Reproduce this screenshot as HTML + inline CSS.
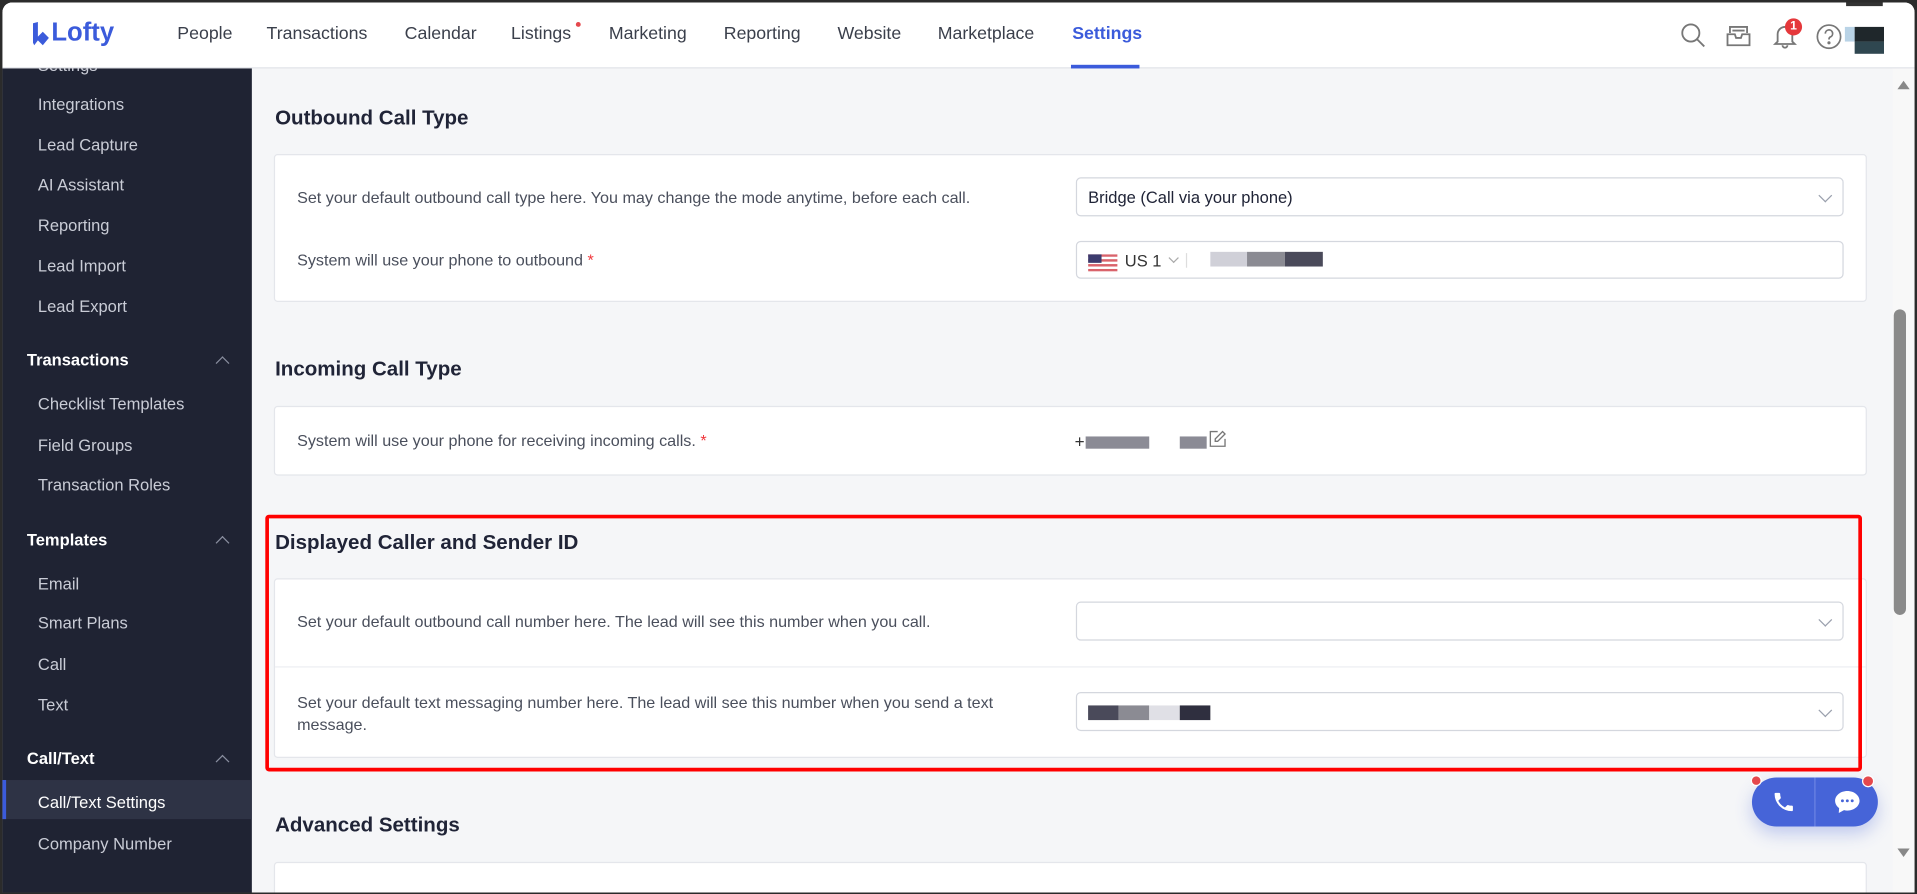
<!DOCTYPE html>
<html><head><meta charset="utf-8"><style>
*{box-sizing:border-box;margin:0;padding:0}
html,body{width:1917px;height:894px;overflow:hidden;background:#2b2b2b}
#w{position:absolute;left:0;top:0;width:1568px;height:731px;transform:scale(1.22258);transform-origin:0 0;font-family:"Liberation Sans",Arial,sans-serif;background:#2b2b2b}
#in{position:absolute;left:2px;top:2px;right:2px;bottom:1px;background:#f5f6f8;border-radius:8px 8px 0 0;overflow:hidden}
.a{position:absolute}
#hd{left:0;top:0;width:100%;height:54px;background:#fff;border-bottom:1px solid #e1e3e8}
.nav{top:18px;font-size:14.5px;color:#3a3f4b}
#sb{left:0;top:54px;width:204px;bottom:0;background:#1f2333;overflow:hidden}
.si{left:29px;font-size:13.5px;color:#c9ccd6}
.sh{left:20px;font-size:13.5px;color:#fff;font-weight:bold}
.car{left:176px;width:8px;height:8px;border-left:1.3px solid #8a8fa0;border-top:1.3px solid #8a8fa0;transform:rotate(45deg)}
.tt{left:223px;font-size:16.8px;font-weight:bold;color:#202437}
.card{left:222px;width:1303px;background:#fff;border:1px solid #e4e6eb;border-radius:3px}
.tx{left:241px;font-size:13.2px;color:#4a4f5c}
.sel{left:878px;width:628px;height:32px;border:1px solid #d4d7de;border-radius:4px;background:#fff;font-size:13.5px;color:#202437;padding:8px 9px}
.chev{position:absolute;right:10px;top:10px;width:8px;height:8px;border-right:1px solid #9aa0ad;border-bottom:1px solid #9aa0ad;transform:rotate(45deg)}
.st{color:#f0353a}
.bl{position:absolute;height:12px}
</style></head><body><div id="w"><div id="in">
<div id="hd" class="a">
 <svg class="a" style="left:24px;top:16px" width="14" height="20" viewBox="0 0 14 20"><path d="M1 1 L5 0 L5 12 L9 8 L14 13 L9 19 L5 15 L2 19 L1 17Z" fill="#3b5bdb"/></svg>
 <div class="a" style="left:40px;top:13px;font-size:21px;font-weight:bold;color:#3b5bdb">Lofty</div>
 <div class="a nav" style="left:143px">People</div>
 <div class="a nav" style="left:216px">Transactions</div>
 <div class="a nav" style="left:329px">Calendar</div>
 <div class="a nav" style="left:416px">Listings</div>
 <div class="a" style="left:469px;top:16px;width:4px;height:4px;border-radius:2px;background:#e5484d"></div>
 <div class="a nav" style="left:496px">Marketing</div>
 <div class="a nav" style="left:590px">Reporting</div>
 <div class="a nav" style="left:683px">Website</div>
 <div class="a nav" style="left:765px">Marketplace</div>
 <div class="a nav" style="left:875px;color:#3b5bdb;font-weight:bold">Settings</div>
 <div class="a" style="left:874px;top:51px;width:56px;height:3px;background:#3b5bdb"></div>
 <svg class="a" style="left:1372px;top:16px" width="22" height="22" viewBox="0 0 22 22" fill="none" stroke="#777" stroke-width="1.5"><circle cx="9" cy="9" r="7"/><path d="M14 14l6 6"/></svg>
 <svg class="a" style="left:1409px;top:16px" width="22" height="22" viewBox="0 0 22 22" fill="none" stroke="#777" stroke-width="1.5"><path d="M4 9V4h14v5M2 10h6l1 3h4l1-3h6v9H2z"/><path d="M6 7h10"/></svg>
 <svg class="a" style="left:1447px;top:16px" width="22" height="22" viewBox="0 0 22 22" fill="none" stroke="#777" stroke-width="1.5"><path d="M5 16V10a6 6 0 0 1 12 0v6l2 2H3z"/><path d="M9 19a2 2 0 0 0 4 0"/></svg>
 <div class="a" style="left:1458px;top:13px;width:14px;height:14px;border-radius:7px;background:#e5383b;color:#fff;font-size:10px;font-weight:bold;text-align:center;line-height:14px">1</div>
 <svg class="a" style="left:1483px;top:17px" width="22" height="22" viewBox="0 0 22 22" fill="none" stroke="#777" stroke-width="1.4"><circle cx="11" cy="11" r="9.5"/><path d="M8 8.5a3 3 0 1 1 4 2.8c-.8.4-1 1-1 2"/><circle cx="11" cy="16" r=".6" fill="#777"/></svg>
 <div class="a" style="left:1507px;top:20px;width:8px;height:12px;background:#b9d3e6"></div>
 <div class="a" style="left:1515px;top:20px;width:24px;height:12px;background:#1f272b"></div>
 <div class="a" style="left:1515px;top:32px;width:24px;height:10px;background:#2f4750"></div>
 <div class="a" style="left:1508px;top:0;width:30px;height:3px;background:#333"></div>
</div>
<div id="sb" class="a">
 <div class="a si" style="top:-10px">Settings</div>
 <div class="a si" style="top:22px">Integrations</div>
 <div class="a si" style="top:55px">Lead Capture</div>
 <div class="a si" style="top:88px">AI Assistant</div>
 <div class="a si" style="top:121px">Reporting</div>
 <div class="a si" style="top:154px">Lead Import</div>
 <div class="a si" style="top:187px">Lead Export</div>
 <div class="a sh" style="top:231px">Transactions</div><div class="a car" style="top:237px"></div>
 <div class="a si" style="top:267px">Checklist Templates</div>
 <div class="a si" style="top:301px">Field Groups</div>
 <div class="a si" style="top:333px">Transaction Roles</div>
 <div class="a sh" style="top:378px">Templates</div><div class="a car" style="top:384px"></div>
 <div class="a si" style="top:414px">Email</div>
 <div class="a si" style="top:446px">Smart Plans</div>
 <div class="a si" style="top:480px">Call</div>
 <div class="a si" style="top:513px">Text</div>
 <div class="a sh" style="top:557px">Call/Text</div><div class="a car" style="top:563px"></div>
 <div class="a" style="left:0;top:582px;width:204px;height:32px;background:#2e3345;border-left:3px solid #3b5bdb"></div>
 <div class="a si" style="top:593px;color:#fff">Call/Text Settings</div>
 <div class="a si" style="top:627px">Company Number</div>
</div>
<div class="a tt" style="top:85px">Outbound Call Type</div>
<div class="a card" style="top:124px;height:121px"></div>
<div class="a tx" style="top:152px">Set your default outbound call type here. You may change the mode anytime, before each call.</div>
<div class="a sel" style="top:143px">Bridge (Call via your phone)<span class="chev"></span></div>
<div class="a tx" style="top:203px">System will use your phone to outbound <span class="st">*</span></div>
<div class="a sel" style="top:195px;height:31px;padding:7px 9px">
 <svg style="position:absolute;left:9px;top:10px" width="24" height="14" viewBox="0 0 24 14"><rect width="24" height="14" fill="#fff"/><g fill="#d9636b"><rect y="0" width="24" height="2"/><rect y="4" width="24" height="2"/><rect y="8" width="24" height="2"/><rect y="12" width="24" height="2"/></g><rect width="11" height="7" fill="#3c3b6e"/></svg>
 <span style="position:absolute;left:39px;top:8px;color:#333">US 1</span>
 <span style="position:absolute;left:76px;top:10px;width:6px;height:6px;border-right:1px solid #aaa;border-bottom:1px solid #aaa;transform:rotate(45deg)"></span>
 <span style="position:absolute;left:89px;top:9px;width:1px;height:12px;background:#ddd"></span>
 <span class="bl" style="left:109px;top:8px;width:30px;background:#d0d0d8"></span><span class="bl" style="left:139px;top:8px;width:31px;background:#8b8b93"></span><span class="bl" style="left:170px;top:8px;width:31px;background:#4a4a5a"></span>
</div>
<div class="a tt" style="top:290px">Incoming Call Type</div>
<div class="a card" style="top:330px;height:57px"></div>
<div class="a tx" style="top:351px">System will use your phone for receiving incoming calls. <span class="st">*</span></div>
<div class="a" style="left:877px;top:351px;font-size:14px;color:#333">+</div>
<div class="a" style="left:886px;top:355px;width:52px;height:10px;background:#8b8b95"></div>
<div class="a" style="left:963px;top:355px;width:22px;height:10px;background:#8b8b95"></div>
<svg class="a" style="left:987px;top:350px" width="14" height="14" viewBox="0 0 14 14" fill="none" stroke="#777" stroke-width="1.1"><path d="M7 1H1v12h12V7"/><path d="M11 1l2 2-6 6H5V7z"/></svg>
<div class="a tt" style="top:432px">Displayed Caller and Sender ID</div>
<div class="a card" style="top:471px;height:147px"></div>
<div class="a" style="left:223px;top:543px;width:1301px;height:1px;background:#eceef2"></div>
<div class="a tx" style="top:499px">Set your default outbound call number here. The lead will see this number when you call.</div>
<div class="a sel" style="top:490px"><span class="chev"></span></div>
<div class="a tx" style="top:564px;line-height:18px;width:600px">Set your default text messaging number here. The lead will see this number when you send a text message.</div>
<div class="a sel" style="top:564px"><span class="chev"></span>
 <span class="bl" style="left:9px;top:10px;width:25px;background:#4a4a5a"></span><span class="bl" style="left:34px;top:10px;width:25px;background:#8b8b93"></span><span class="bl" style="left:59px;top:10px;width:25px;background:#e0e0e6"></span><span class="bl" style="left:84px;top:10px;width:25px;background:#2f2f3f"></span>
</div>
<div class="a" style="left:215px;top:419px;width:1306px;height:210px;border:3px solid #f00;border-radius:3px"></div>
<div class="a tt" style="top:663px">Advanced Settings</div>
<div class="a card" style="top:703px;height:40px"></div>
<div class="a" style="left:1431px;top:634px;width:103px;height:40px;border-radius:20px;background:#4664d8;box-shadow:0 6px 14px rgba(70,100,216,.3)"></div>
<div class="a" style="left:1482px;top:634px;width:1px;height:40px;background:#6b84e3"></div>
<svg class="a" style="left:1447px;top:644px" width="20" height="20" viewBox="0 0 24 24"><path fill="#fff" d="M6.6 10.8a15 15 0 0 0 6.6 6.6l2.2-2.2c.3-.3.7-.4 1-.2 1.1.4 2.3.6 3.6.6.6 0 1 .4 1 1V20c0 .6-.4 1-1 1A17 17 0 0 1 3 4c0-.6.4-1 1-1h3.5c.6 0 1 .4 1 1 0 1.3.2 2.5.6 3.6.1.3 0 .7-.2 1z"/></svg>
<svg class="a" style="left:1498px;top:644px" width="22" height="20" viewBox="0 0 22 20"><path fill="#fff" d="M11 1C5.5 1 1 4.6 1 9c0 2.4 1.3 4.5 3.3 6L4 19l4.3-2.4c.9.2 1.8.4 2.7.4 5.5 0 10-3.6 10-8s-4.5-8-10-8z"/><g fill="#4664d8"><circle cx="7" cy="9" r="1.2"/><circle cx="11" cy="9" r="1.2"/><circle cx="15" cy="9" r="1.2"/></g></svg>
<div class="a" style="left:1430px;top:632px;width:9px;height:9px;border-radius:5px;background:#e5484d;border:1.5px solid #fff"></div>
<div class="a" style="left:1521px;top:632px;width:10px;height:10px;border-radius:5px;background:#e5484d;border:1.5px solid #fff"></div>
<div class="a" style="left:1546px;top:54px;width:18px;height:676px;background:#f8f8f8"></div>
<div class="a" style="left:1550px;top:64px;width:0;height:0;border-left:5px solid transparent;border-right:5px solid transparent;border-bottom:7px solid #888"></div>
<div class="a" style="left:1550px;top:692px;width:0;height:0;border-left:5px solid transparent;border-right:5px solid transparent;border-top:7px solid #888"></div>
<div class="a" style="left:1547px;top:251px;width:10px;height:250px;border-radius:5px;background:#8a8a8a"></div>
</div></div></body></html>
